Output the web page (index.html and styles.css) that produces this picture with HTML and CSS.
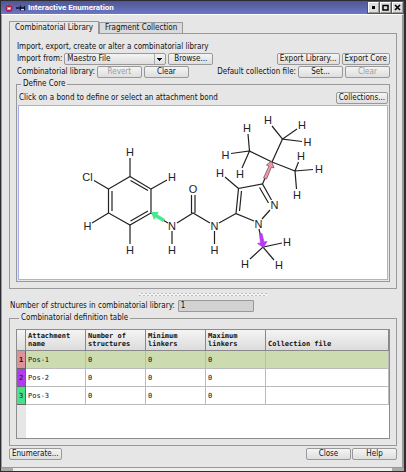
FILE: index.html
```html
<!DOCTYPE html>
<html lang="en">
<head>
<meta charset="utf-8">
<title>Interactive Enumeration</title>
<link rel="stylesheet" href="styles.css">
</head>
<body>
<div class="window">
  <header class="titlebar">
    <svg class="title-icons" viewBox="0 0 24 12" width="24" height="12" aria-hidden="true">
      <circle cx="6" cy="6.500" r="3.600" fill="#b51f48"/>
      <path d="M3.500 1.500l1.500 1M8.500 1.500l-1.500 1" stroke="#b04a78" stroke-width="1"/>
      <path d="M5 5v3M7 5v3M5 6.500h2" stroke="#fff" stroke-width="1"/>
      <path d="M13 6h4M17.500 3.500v5M17 6h5M21.500 4v4.500" stroke="#15152a" stroke-width="1.300" fill="none"/>
      <path d="M18 7.500h3" stroke="#d5d7ec" stroke-width="1"/>
    </svg>
    <h1 class="title">Interactive Enumeration</h1>
    <div class="window-buttons">
      <button class="window-button" aria-label="Minimize"><svg viewBox="0 0 9 9" width="9" height="9"><path d="M3 3h3v3H3z"/></svg></button>
      <button class="window-button" aria-label="Maximize"><svg viewBox="0 0 9 9" width="9" height="9"><path d="M2 2.500h5v4.500H2z" fill="none" stroke="#000" stroke-width="1.500"/></svg></button>
      <button class="window-button" aria-label="Close window"><svg viewBox="0 0 9 9" width="9" height="9"><path d="M2 2l5 5M7 2L2 7" stroke="#000" stroke-width="1.700"/></svg></button>
    </div>
  </header>

  <main class="content">
    <div class="tabs" role="tablist">
      <button class="tab tab-active" role="tab" aria-selected="true">Combinatorial Library</button>
      <button class="tab" role="tab" aria-selected="false">Fragment Collection</button>
    </div>
    <section class="pane" role="tabpanel">
      <p class="intro">Import, export, create or alter a combinatorial library</p>
      <div class="row">
        <label for="source">Import from:</label>
        <span class="select-wrap"><select id="source" class="select"><option>Maestro File</option></select></span>
        <button class="button button-wide">Browse...</button>
        <span class="spacer"></span>
        <button class="button button-export">Export Library...</button>
        <button class="button">Export Core</button>
      </div>
      <div class="row">
        <span>Combinatorial library:</span>
        <button class="button button-wide" disabled>Revert</button>
        <button class="button button-wide">Clear</button>
        <span class="spacer"></span>
        <span>Default collection file:</span>
        <button class="button button-wide">Set...</button>
        <button class="button button-wide" disabled>Clear</button>
      </div>
      <fieldset class="group core">
        <legend>Define Core</legend>
        <div class="row core-row">
          <span>Click on a bond to define or select an attachment bond</span>
          <span class="spacer"></span>
          <button class="button">Collections...</button>
        </div>
        <div class="canvas">
          <svg class="molecule" viewBox="19 106 368 173" role="img" aria-label="Core structure">
            <g class="bonds">
              <path d="M130 176.500L151 189V213L130 225L108.500 213V189Z"/>
              <path d="M130.500 180.500L148 190.500M112 191V211M130.500 221L148 211"/>
              <path d="M130 158V176.500M94 180.500L108.500 189M151 189L167 180M92 223L108.500 213M130 225V244"/>
              <path d="M151 213L168 223M172 231V244M177 223L193 213L210 223M191.500 195V213M195 195V213M214.500 231V244M219 223L236 213.500"/>
              <path d="M254 221L236 213.500L238.500 188.500L262.500 184L271.500 200M241.500 191L239.500 211M259.500 187.500L268.500 203M262 219L270 210M225 177L238.500 188.500"/>
              <path d="M262.500 184L272 162L249.500 151L248 134M231 153.500L249.500 151L242 168M272 162L282.500 139L272 126M297 129L282.500 139L302 141.500M272 162L295 171L298.500 162M313 169.500L295 171L296.500 189"/>
              <path d="M259 229L263 247L282 243M250 259L263 247L274 260"/>
            </g>
            <path d="M151 212L158.500 212L157.500 214.500L165 219L163 222L155.500 217.500L154 220Z" fill="#46e98c"/>
            <path d="M271.500 161L274 168L271.500 167L266.500 179L263.500 178L269 166L266.500 165Z" fill="#f39aa8" stroke="#6b3f49" stroke-width=".7"/>
            <path d="M263.500 247.500L257.500 243.500L260.500 243L259.500 234L262 233.500L264 242L267 241.500Z" fill="#b83af5" stroke="#b83af5" stroke-width=".7"/>
            <g class="atoms">
              <text x="130" y="156">H</text><text x="87.500" y="181">Cl</text><text x="172" y="181">H</text>
              <text x="87.500" y="230">H</text><text x="130" y="254">H</text><text x="172" y="230">N</text>
              <text x="172" y="254">H</text><text x="193" y="193">O</text><text x="214.500" y="230">N</text>
              <text x="214.500" y="254">H</text><text x="258.500" y="228">N</text><text x="274.500" y="209">N</text>
              <text x="220" y="177">H</text><text x="247" y="132">H</text><text x="225.500" y="159">H</text>
              <text x="240" y="178">H</text><text x="268" y="124">H</text><text x="302" y="129">H</text>
              <text x="307.500" y="146">H</text><text x="301" y="160">H</text><text x="319" y="173">H</text>
              <text x="297" y="199">H</text><text x="287" y="246">H</text><text x="245" y="268">H</text><text x="279" y="269">H</text>
            </g>
          </svg>
        </div>
      </fieldset>
    </section>

    <div class="splitter"></div>

    <div class="row count-row">
      <label for="count">Number of structures in combinatorial library:</label>
      <input id="count" class="count" type="text" value="1" readonly>
    </div>

    <fieldset class="group definitions">
      <legend>Combinatorial definition table</legend>
      <div class="table-box">
        <table class="table">
          <colgroup><col class="col-index"><col class="col-data"><col class="col-data"><col class="col-data"><col class="col-data"><col></colgroup>
          <thead>
            <tr><th></th><th>Attachment<br>name</th><th>Number of<br>structures</th><th>Minimum<br>linkers</th><th>Maximum<br>linkers</th><th>Collection file</th></tr>
          </thead>
          <tbody>
            <tr class="selected"><th class="pink">1</th><td>Pos-1</td><td>0</td><td>0</td><td>0</td><td></td></tr>
            <tr><th class="purple">2</th><td>Pos-2</td><td>0</td><td>0</td><td>0</td><td></td></tr>
            <tr><th class="green">3</th><td>Pos-3</td><td>0</td><td>0</td><td>0</td><td></td></tr>
          </tbody>
        </table>
      </div>
    </fieldset>

    <footer class="row footer">
      <button class="button">Enumerate...</button>
      <span class="spacer"></span>
      <button class="button button-wide">Close</button>
      <button class="button button-wide">Help</button>
    </footer>
  </main>
  <div class="grip"></div>
</div>
</body>
</html>
```
FILE: styles.css
```css
* { box-sizing: border-box; }

body {
  margin: 0;
  font-family: "DejaVu Sans Condensed", "DejaVu Sans", sans-serif;
  font-size: 8px;
  line-height: 12px;
  color: #111;
  background: #2c2c32;
}

button, select, input { font: inherit; color: inherit; margin: 0; }

.window {
  display: flex;
  flex-direction: column;
  min-height: 100vh;
  border: solid #2c2c32;
  border-width: 1px 2px 1px 1px;
  background: #e6e6e6;
}

.titlebar {
  display: flex;
  align-items: center;
  gap: 1px;
  height: 13px;
  padding-left: 2px;
  background: linear-gradient(#4f5693, #6b76c6);
}
.title-icons { flex: none; }
.title {
  flex: 1;
  margin: 0;
  font-family: Roboto, sans-serif;
  font-size: 8px;
  line-height: 12px;
  color: #fff;
}
.window-buttons { display: flex; gap: 1px; padding: 1px; background: #55555f; }
.window-button {
  width: 11px;
  height: 11px;
  padding: 0;
  display: grid;
  place-items: center;
  border: 1px solid #fff;
  border-right-color: #999;
  border-bottom-color: #999;
  background: #ddd;
}

.content {
  flex: 1;
  display: flex;
  flex-direction: column;
  padding: 6px 5px 0 7px;
  border: 1px solid #999;
  border-top-color: #fff;
  border-right-width: 2px;
}

.tabs { display: flex; align-items: flex-end; }
.tab {
  height: 11px;
  padding: 0 5px;
  line-height: 10px;
  border: 1px solid #999;
  border-bottom: 0;
  border-radius: 1px 1px 0 0;
  background: #dadada;
}
.tab-active {
  position: relative;
  height: 13px;
  margin-bottom: -1px;
  line-height: 12px;
  background: #e6e6e6;
}

.pane { border: 1px solid #999; padding: 7px 6px 6px; }
.intro { margin: 0; padding-left: 1px; line-height: 11px; }
.row { display: flex; align-items: center; gap: 2px; height: 13px; padding-left: 1px; white-space: nowrap; }
.spacer { flex: 1; }

.button {
  height: 12px;
  padding: 0 2px;
  line-height: 10px;
  border: 1px solid #999;
  border-radius: 2px;
  background: linear-gradient(#f4f4f4, #dedede);
  white-space: nowrap;
}
.button:disabled { color: #9a9a9a; }
.button-wide { width: 45px; }
.button-export { min-width: 60px; }

.select-wrap { position: relative; display: flex; width: 102px; }
.select {
  appearance: none;
  width: 100%;
  height: 12px;
  padding: 0 2px;
  line-height: 10px;
  border: 1px solid #999;
  border-radius: 2px;
  background: linear-gradient(#f4f4f4, #dedede);
}
.select-wrap::after {
  content: "";
  position: absolute;
  top: 1px;
  right: 1px;
  width: 10px;
  height: 10px;
  border-left: 1px solid #aaa;
  background: linear-gradient(#111, #111) 2px 4px / 5px 1px no-repeat,
    linear-gradient(#111, #111) 3px 5px / 3px 1px no-repeat,
    linear-gradient(#111, #111) 4px 6px / 1px 1px no-repeat;
}

.group { min-width: 0; margin: 0; border: 1px solid #999; }
.group legend { margin-left: 3px; padding: 0 2px; line-height: 12px; }
.core { padding: 0 1px 1px; }
.core-row { height: 15px; }
.canvas { border: 1px solid #a6aff0; background: #fff; }
.molecule { display: block; width: 100%; height: auto; }
.bonds { fill: none; stroke: #222; stroke-width: 1.2; }
.atoms { font-family: "Liberation Sans", sans-serif; font-size: 11px; text-anchor: middle; fill: #222; }

.splitter {
  align-self: center;
  width: 128px;
  height: 3px;
  margin: 4px 0 3px;
  background: repeating-conic-gradient(#bbb 0 25%, #f4f4f4 0 50%) 0 0 / 4px 3px;
}

.count-row { gap: 3px; }
.count {
  width: 76px;
  height: 12px;
  padding: 0 2px;
  border: 1px solid #999;
  border-radius: 1px;
  background: #d2d2d2;
}

.definitions { flex: 1; display: flex; padding: 5px 6px; }
.table-box {
  width: 100%;
  min-height: 110px;
  border: 1px solid #8c8c8c;
  background: linear-gradient(90deg, #e6e6e6 9px, #fff 9px);
}
.table {
  width: 100%;
  table-layout: fixed;
  border-collapse: separate;
  border-spacing: 0;
  font-family: "DejaVu Sans Mono", monospace;
  font-size: 7px;
  line-height: 8px;
}
.col-index { width: 9px; }
.col-data { width: 60px; }
.table th, .table td { padding: 0 2px; text-align: left; border: solid #bbb; border-width: 0 1px 1px 0; }
.table thead th {
  height: 21px;
  padding-bottom: 2px;
  vertical-align: bottom;
  border-color: #888;
  background: linear-gradient(#f4f4f4, #dcdcdc);
}
.table tbody tr { height: 18px; background: #fff; }
.table tbody th { padding: 0; text-align: center; font-weight: normal; border-color: #666; }
.table .selected { background: #cddcb0; }
.table .selected th { font-weight: bold; }
.table .pink { background: #dc919b; }
.table .purple { background: #b23af0; }
.table .green { background: #46e28a; }

.footer { height: 14px; margin: 1px 0 6px; padding-left: 0; gap: 1px; }
.grip {
  height: 3px;
  border: solid #aaa;
  border-width: 0 12px;
  background: #eee;
}
```
